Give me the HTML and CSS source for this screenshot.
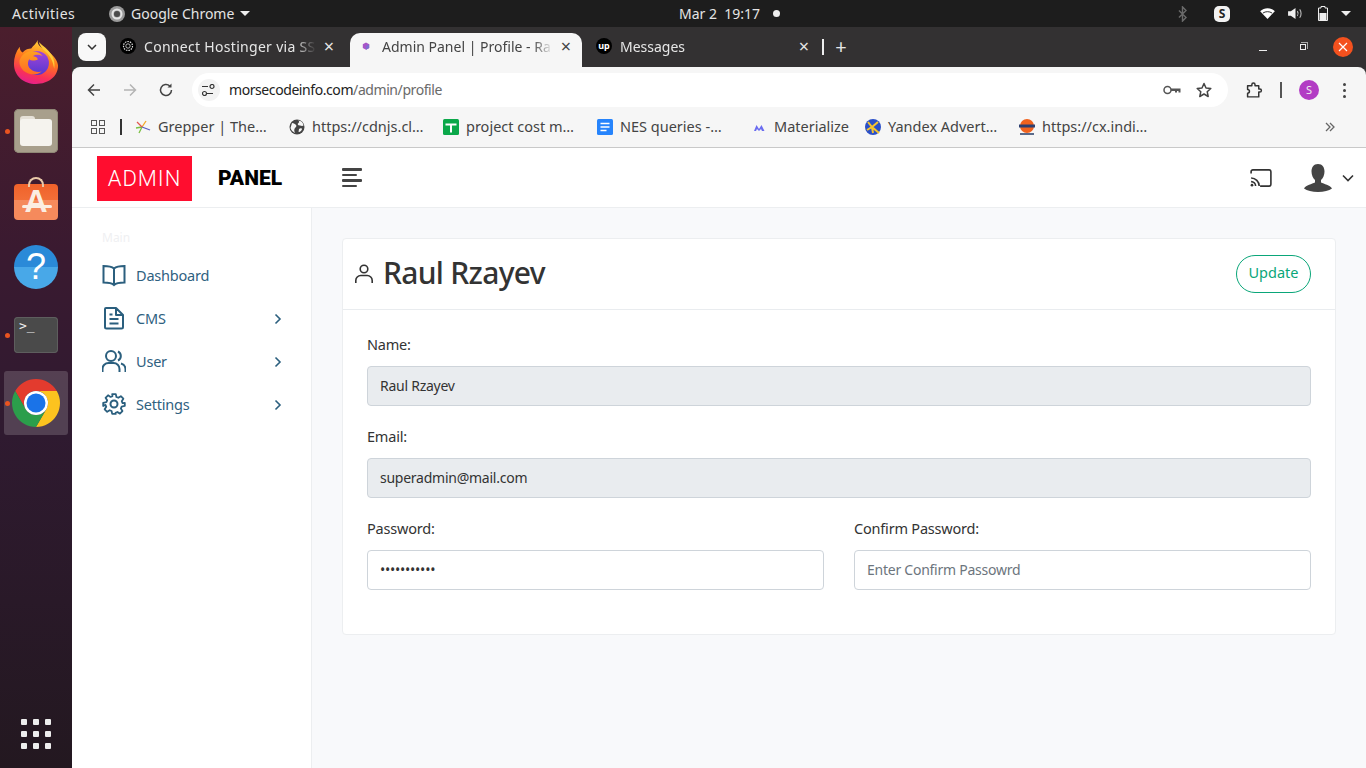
FILE: index.html
```html
<!doctype html>
<html lang="en">
  <head>
    <title>Admin Panel | Profile</title>
    <link rel="stylesheet" href="styles.css">
  </head>
  <body>
    <div class="topbar">
      <div class="topbar-left">
        <span class="activities">Activities</span>
        <span class="app-menu">
          <svg class="app-icon" viewBox="0 0 16 16"><circle cx="8" cy="8" r="8" fill="#9a9a9a"/><circle cx="8" cy="8" r="4.5" fill="none" stroke="#e4e4e4" stroke-width="2"/><circle cx="8" cy="8" r="3" fill="#4a4a4a"/></svg>
          Google Chrome
          <span class="caret"></span>
        </span>
      </div>
      <div class="clock">
        <span>Mar 2&nbsp;&nbsp;19:17</span>
        <span class="clock-dot"></span>
      </div>
      <div class="tray">
        <svg class="tray-bt" viewBox="0 0 10 18"><path d="M1 5l8 8-4 4V1l4 4-8 8" fill="none" stroke="#6a6a6a" stroke-width="1.6"/></svg>
        <span class="tray-skype">S</span>
        <svg class="tray-wifi" viewBox="0 0 16 12"><path d="M0 3.5C4.5-.8 11.5-.8 16 3.5L8 12z" fill="#fff"/><path d="M3 5.5c3-2 7-2 10 0" fill="none" stroke="#1d1d1d" stroke-width="1"/></svg>
        <svg class="tray-vol" viewBox="0 0 16 14"><path d="M0 4.5h3L8 1v12L3 9.5H0z" fill="#eee"/><path d="M10 4.5c1 1.5 1 3.5 0 5M12.5 2.5c2 2.5 2 6.5 0 9" fill="none" stroke="#bbb" stroke-width="1.2"/></svg>
        <svg class="tray-bat" viewBox="0 0 10 15"><path d="M3 .5h4V2h2.500v12.500H.5V2H3z" fill="none" stroke="#eee" stroke-width="1"/><rect x="1.5" y="7" width="7" height="7" fill="#eee"/></svg>
        <span class="caret"></span>
      </div>
    </div>

    <div class="desktop">
      <div class="dock">
        <div class="dock-item dock-first">
          <svg class="dock-firefox" viewBox="0 0 48 48">
            <defs>
              <linearGradient id="foxOuter" x1="0.7" y1="0" x2="0.4" y2="1"><stop offset="0" stop-color="#ffd93a"/><stop offset="0.45" stop-color="#ff7a1c"/><stop offset="0.8" stop-color="#f8305a"/><stop offset="1" stop-color="#e5208a"/></linearGradient>
              <linearGradient id="foxGlobe" x1="0.5" y1="0" x2="0.5" y2="1"><stop offset="0" stop-color="#a645d8"/><stop offset="1" stop-color="#5538d0"/></linearGradient>
              <linearGradient id="foxHead" x1="0.5" y1="0" x2="0.5" y2="1"><stop offset="0" stop-color="#ffa01f"/><stop offset="1" stop-color="#ff6a25"/></linearGradient>
            </defs>
            <path d="M26 1c-2 6 6 9 12 13 6 5 9 10 9 14 0 11-10 19-23 19C11 47 1 38 1 26c0-7 2-13 6-18 0 3 1 5 3 6 3-3 6-4 9-4 2-3 5-5 7-9z" fill="url(#foxOuter)"/>
            <circle cx="25" cy="25" r="12.500" fill="url(#foxGlobe)"/>
            <path d="M7 22c2-6 8-10 14-9 4 0 8 2 10 5-4-2-8-2-10 0 2 0 4 1 5 3-3 2-7 2-9 0-2 3-2 7 1 10 3 3 8 4 12 3-6 5-14 3-19-1-3-3-5-7-4-11z" fill="url(#foxHead)"/>
            <path d="M27 3c4 4 10 8 13 13 3 5 4 10 3 15-1-6-3-12-8-17-3-3-7-6-8-11z" fill="#ffcb3a"/>
          </svg>
        </div>
        <div class="dock-item">
          <span class="dock-dot"></span>
          <div class="dock-files"><div class="files-tab"></div><div class="files-folder"></div></div>
        </div>
        <div class="dock-item">
          <div class="dock-store"><span class="store-handle"></span><span class="store-a">A</span></div>
        </div>
        <div class="dock-item">
          <div class="dock-help">?</div>
        </div>
        <div class="dock-item">
          <span class="dock-dot"></span>
          <div class="dock-term">&gt;_</div>
        </div>
        <div class="dock-item dock-active">
          <span class="dock-dot"></span>
          <svg class="dock-chrome" viewBox="0 0 48 48">
            <path d="M44.78 12A24 24 0 0 0 3.22 12L13.6 30A12 12 0 0 1 24 12Z" fill="#e33b2e"/>
            <path d="M24 48A24 24 0 0 0 44.78 12L24 12A12 12 0 0 1 34.4 30Z" fill="#fcc31f"/>
            <path d="M3.22 12A24 24 0 0 0 24 48L34.4 30A12 12 0 0 1 13.6 30Z" fill="#2b9e4b"/>
            <circle cx="24" cy="24" r="12" fill="#fff"/>
            <circle cx="24" cy="24" r="9.5" fill="#1a73e8"/>
          </svg>
        </div>
        <div class="dock-grid">
          <i></i><i></i><i></i><i></i><i></i><i></i><i></i><i></i><i></i>
        </div>
      </div>

      <div class="window">
        <div class="tabstrip">
          <button class="tab-search"><svg viewBox="0 0 10 6"><path d="M1 1l4 4 4-4" fill="none" stroke="#333" stroke-width="1.5"/></svg></button>
          <div class="tab tab-first">
            <svg class="tab-fav" viewBox="0 0 16 16"><circle cx="8" cy="8" r="8" fill="#000"/><circle cx="8" cy="8" r="4.5" fill="none" stroke="#ddd" stroke-width="1.2" stroke-dasharray="1.5 1"/><circle cx="8" cy="8" r="2.2" fill="none" stroke="#ddd" stroke-width="0.8"/></svg>
            <span class="tab-title">Connect Hostinger via SS</span>
            <span class="tab-x">&times;</span>
          </div>
          <div class="tab tab-active">
            <svg class="tab-fav" viewBox="0 0 16 16"><path d="M8 4.500l3.200 1.800v3.600L8 11.700 4.800 9.900V6.300z" fill="#a855c8"/><path d="M8 8l3.200-1.700v3.600L8 11.700z" fill="#7d6fd0"/></svg>
            <span class="tab-title">Admin Panel | Profile - Ra</span>
            <span class="tab-x">&times;</span>
          </div>
          <div class="tab tab-last">
            <span class="tab-up">up</span>
            <span class="tab-title">Messages</span>
            <span class="tab-x">&times;</span>
          </div>
          <span class="tab-sep"></span>
          <span class="tab-new">+</span>
          <div class="win-controls">
            <span class="win-min"></span>
            <span class="win-max"></span>
            <span class="win-close"><svg viewBox="0 0 10 10"><path d="M1 1l8 8M9 1l-8 8" stroke="#fff" stroke-width="1.2"/></svg></span>
          </div>
        </div>

        <div class="toolbar">
          <svg class="tool-ic" viewBox="0 0 16 16"><path d="M14 8H2.500M8 2.500L2.500 8 8 13.500" fill="none" stroke="#444" stroke-width="1.5"/></svg>
          <svg class="tool-ic tool-off" viewBox="0 0 16 16"><path d="M2 8h11.500M8 2.500L13.500 8 8 13.500" fill="none" stroke="#b4b4b4" stroke-width="1.5"/></svg>
          <svg class="tool-ic" viewBox="0 0 16 16"><path d="M13.500 8A5.500 5.500 0 1 1 11.800 4" fill="none" stroke="#444" stroke-width="1.5"/><path d="M13.500 1.500v4h-4z" fill="#444"/></svg>
          <div class="omnibox">
            <span class="site-info"><svg viewBox="0 0 14 12"><path d="M0 2.500h6M11 9.500H5" stroke="#333" stroke-width="1.2"/><circle cx="10" cy="2.500" r="2" fill="none" stroke="#333" stroke-width="1.2"/><circle cx="2.500" cy="9.500" r="2" fill="none" stroke="#333" stroke-width="1.2"/></svg></span>
            <span class="url">morsecodeinfo.com<span class="url-path">/admin/profile</span></span>
            <svg class="omni-key" viewBox="0 0 18 10"><circle cx="4.500" cy="5" r="3.500" fill="none" stroke="#555" stroke-width="1.5"/><path d="M8 3.500h9.500v4h-2V6h-1.500v1.500h-2V6H8z" fill="#555"/></svg>
            <svg class="omni-star" viewBox="0 0 16 16"><path d="M8 1.500l2 4.500 4.800.5-3.600 3.200 1 4.800L8 12l-4.200 2.500 1-4.800L1.200 6.500 6 6z" fill="none" stroke="#444" stroke-width="1.5" stroke-linejoin="round"/></svg>
          </div>
          <svg class="tool-ext" viewBox="0 0 16 16"><path d="M5.500 2.500a1.500 1.500 0 0 1 3 0V3.500h3.500v3h1a1.500 1.500 0 0 1 0 3h-1v4.500H1.500v-3.500a1.500 1.500 0 0 0 0-3.500V3.500h4z" fill="none" stroke="#333" stroke-width="1.4" stroke-linejoin="round"/></svg>
          <span class="tool-sep"></span>
          <span class="avatar">S</span>
          <span class="tool-menu"><i></i><i></i><i></i></span>
        </div>

        <div class="bookmarks">
          <span class="apps"><i></i><i></i><i></i><i></i></span>
          <span class="bm-sep"></span>
          <span class="bm">
            <svg viewBox="0 0 16 16"><path d="M7 8l-3 6M7 8l-6 1" stroke="#7bc043" stroke-width="1.3" fill="none"/><path d="M7 8l4-6" stroke="#f5a623" stroke-width="1.3"/><path d="M7 8l8 3" stroke="#5c5fc4" stroke-width="1.3"/><path d="M7 8L2 3" stroke="#e2554f" stroke-width="1.3"/></svg>
            Grepper | The…
          </span>
          <span class="bm">
            <svg viewBox="0 0 16 16"><circle cx="8" cy="8" r="7.5" fill="#444"/><path d="M3 4c2 0 3 1 4 2s0 2-1 3-1 3 0 5c-2-1-4-3-4.500-5zM9 1.500c2 1 1 2 0 3s1 2 2 2 2 1 3.500 0c0-2-2-5-5.500-5zM10 10c1-1 3-1 3 0s-2 3-3 3 0-2 0-3z" fill="#f6f6f6"/></svg>
            https://cdnjs.cl…
          </span>
          <span class="bm">
            <svg viewBox="0 0 16 16"><rect width="16" height="16" rx="1.5" fill="#0ba84a"/><path d="M2.500 5.500h11M8 5.500v8" stroke="#fff" stroke-width="2"/></svg>
            project cost m…
          </span>
          <span class="bm">
            <svg viewBox="0 0 16 16"><rect width="16" height="16" rx="1.5" fill="#2684fc"/><path d="M3.500 4.500h9M3.500 8h9M3.500 11.500h6" stroke="#fff" stroke-width="1.5"/></svg>
            NES queries -…
          </span>
          <span class="bm bm-short">
            <svg viewBox="0 0 16 16"><path d="M3 12l2.500-6 2.500 4 2.500-4 3 6h-2.500l-1-2-2 2-2-2-1 2z" fill="#6a6cf0"/></svg>
            Materialize
          </span>
          <span class="bm">
            <svg viewBox="0 0 16 16"><circle cx="8" cy="8" r="8" fill="#2a4fc8"/><path d="M3 3l4 5 6-5M2 11l5-3 7 6M7 8l1 6" fill="none" stroke="#f7c52e" stroke-width="2"/></svg>
            Yandex Advert…
          </span>
          <span class="bm">
            <svg viewBox="0 0 16 16"><circle cx="8" cy="7" r="7" fill="#f0621e"/><rect x="0" y="5.500" width="16" height="3" fill="#2c3e70"/><rect x="1" y="14" width="14" height="2" fill="#5a6a8a"/></svg>
            https://cx.indi…
          </span>
          <svg class="bm-more" viewBox="0 0 10 10"><path d="M1 1l4 4-4 4M5 1l4 4-4 4" fill="none" stroke="#666" stroke-width="1.3"/></svg>
        </div>

        <div class="site-header">
          <div class="logo"><span class="logo-red">ADMIN</span><span class="logo-text">PANEL</span></div>
          <span class="hamburger"><i></i><i class="short"></i><i></i><i class="short"></i></span>
          <svg class="cast" viewBox="0 0 24 20"><path d="M1 5V3a2 2 0 0 1 2-2h18a2 2 0 0 1 2 2v14a2 2 0 0 1-2 2H11" fill="none" stroke="#333" stroke-width="1.8"/><path d="M1 10a9 9 0 0 1 9 9M1 14a5 5 0 0 1 5 5" fill="none" stroke="#333" stroke-width="1.8"/><circle cx="2" cy="18" r="1.5" fill="#333"/></svg>
          <svg class="user-pic" viewBox="0 0 28 28"><path d="M14 0c4.500 0 6.500 3.500 6.500 7.500 0 3.500-1.500 7-3.500 8.500v2.500c3 1.500 9 2.500 11 6-3 2-8 3.500-14 3.500S3 26.500 0 24.500c2-3.500 8-4.500 11-6V16C9 14.500 7.500 11 7.500 7.500 7.500 3.500 9.500 0 14 0z" fill="#444"/></svg>
          <svg class="user-caret" viewBox="0 0 12 8"><path d="M1 1.500l5 5 5-5" fill="none" stroke="#333" stroke-width="1.6"/></svg>
        </div>

        <div class="page">
          <aside class="sidebar">
            <div class="side-title">Main</div>
            <a class="side-link">
              <svg viewBox="0 0 24 24"><path d="M12 5.500C10 3.800 6 3 1.500 3v16.500c4.500 0 8.500.5 10.500 2.500 2-2 6-2.500 10.500-2.500V3C18 3 14 3.800 12 5.500zM12 5.500V22" fill="none" stroke="#2b5f7e" stroke-width="2"/></svg>
              <span>Dashboard</span>
            </a>
            <a class="side-link">
              <svg viewBox="0 0 24 24"><path d="M4 2h10l7 7v12a1.500 1.500 0 0 1-1.500 1.500h-15A1.500 1.500 0 0 1 3 21V3a1 1 0 0 1 1-1zM14 2v7h7M7.500 13h9M7.500 17.500h9M7.500 8.500h3" fill="none" stroke="#2b5f7e" stroke-width="2" stroke-linejoin="round"/></svg>
              <span>CMS</span>
              <svg class="side-arrow" viewBox="0 0 8 12"><path d="M1.500 1.500L6 6l-4.500 4.500" fill="none" stroke="#2b5f7e" stroke-width="1.6"/></svg>
            </a>
            <a class="side-link">
              <svg viewBox="0 0 24 24"><circle cx="9" cy="7" r="5" fill="none" stroke="#2b5f7e" stroke-width="2"/><path d="M.5 23v-3a6 6 0 0 1 6-6h5a6 6 0 0 1 6 6v3M16 2.500a5 5 0 0 1 0 9M19 14.500a6 6 0 0 1 4.500 5.500v3" fill="none" stroke="#2b5f7e" stroke-width="2"/></svg>
              <span>User</span>
              <svg class="side-arrow" viewBox="0 0 8 12"><path d="M1.500 1.500L6 6l-4.500 4.500" fill="none" stroke="#2b5f7e" stroke-width="1.6"/></svg>
            </a>
            <a class="side-link">
              <svg viewBox="0 0 24 24"><circle cx="12" cy="12" r="3.500" fill="none" stroke="#2b5f7e" stroke-width="2"/><path d="M10 1h4l.7 3.200 2.100.9 2.800-1.800 2.800 2.800-1.800 2.800.9 2.100L24 10.800v3.400l-3.500.8-.9 2.100 1.800 2.800-2.800 2.800-2.800-1.800-2.100.9L14 23h-4l-.7-3.200-2.100-.9-2.800 1.800-2.800-2.800 1.800-2.800-.9-2.100L0 14.200v-3.400l3.500-.8.900-2.100-1.800-2.800 2.800-2.800 2.800 1.800 2.100-.9z" fill="none" stroke="#2b5f7e" stroke-width="2" stroke-linejoin="round" transform="translate(1.2 1.2) scale(.9)"/></svg>
              <span>Settings</span>
              <svg class="side-arrow" viewBox="0 0 8 12"><path d="M1.500 1.500L6 6l-4.500 4.500" fill="none" stroke="#2b5f7e" stroke-width="1.6"/></svg>
            </a>
          </aside>

          <main class="content">
            <div class="card">
              <div class="card-header">
                <h1>
                  <svg viewBox="0 0 18 20"><circle cx="9" cy="5" r="3.800" fill="none" stroke="#333" stroke-width="1.6"/><path d="M.8 19v-2.500a5 5 0 0 1 5-5h6.400a5 5 0 0 1 5 5V19" fill="none" stroke="#333" stroke-width="1.6"/></svg>
                  <span class="h1-text">Raul Rzayev</span>
                </h1>
                <button class="btn-update" type="button">Update</button>
              </div>
              <form class="card-body">
                <div class="field">
                  <label>Name:</label>
                  <input type="text" value="Raul Rzayev" disabled>
                </div>
                <div class="field">
                  <label>Email:</label>
                  <input type="text" value="superadmin@mail.com" disabled>
                </div>
                <div class="field-row">
                  <div class="field">
                    <label>Password:</label>
                    <input type="password" value="12345678901">
                  </div>
                  <div class="field">
                    <label>Confirm Password:</label>
                    <input type="password" placeholder="Enter Confirm Passowrd">
                  </div>
                </div>
              </form>
            </div>
          </main>
        </div>
      </div>
    </div>
  </body>
</html>
```

FILE: styles.css
```css
* {
  box-sizing: border-box;
}

html, body {
  margin: 0;
  height: 100%;
  overflow: hidden;
}

body {
  width: 1366px;
  height: 768px;
  display: flex;
  flex-direction: column;
  font-family: "Noto Sans", sans-serif;
  background: #fff;
}

/* ubuntu top bar */
.topbar {
  height: 27px;
  flex: none;
  background: #1d1d1d;
  color: #e4e4e4;
  font-size: 14px;
  display: flex;
  align-items: center;
  padding-left: 12px;
}

.topbar-left {
  width: 667px;
  display: flex;
  align-items: center;
}

.activities {
  width: 97px;
  letter-spacing: 0.5px;
}

.app-menu {
  display: flex;
  align-items: center;
}

.app-icon {
  width: 16px;
  height: 16px;
  margin-right: 6px;
}

.caret {
  display: inline-block;
  width: 0;
  height: 0;
  border-left: 5px solid transparent;
  border-right: 5px solid transparent;
  border-top: 5px solid #eee;
  margin-left: 6px;
}

.clock {
  display: flex;
  align-items: center;
}

.clock-dot {
  width: 7px;
  height: 7px;
  border-radius: 50%;
  background: #eee;
  margin-left: 13px;
}

.tray {
  margin-left: auto;
  padding-right: 15px;
  display: flex;
  align-items: center;
}

.tray-bt {
  width: 9px;
  height: 16px;
}

.tray-skype {
  width: 16px;
  height: 16px;
  margin-left: 27px;
  border-radius: 5px;
  background: #f2f2f2;
  color: #222;
  font-size: 12px;
  font-weight: 700;
  line-height: 16px;
  text-align: center;
}

.tray-wifi {
  width: 15px;
  height: 11px;
  margin-left: 30px;
}

.tray-vol {
  width: 15px;
  height: 13px;
  margin-left: 13px;
}

.tray-bat {
  width: 10px;
  height: 15px;
  margin-left: 15px;
}

.tray-bat + .caret {
  margin-left: 13px;
}

/* dock */
.desktop {
  flex: 1;
  display: flex;
  min-height: 0;
}

.dock {
  width: 72px;
  flex: none;
  padding-top: 2px;
  background: linear-gradient(#4b1e2d 0, #3a1a30 30%, #2f1a30 55%, #231820 100%);
  display: flex;
  flex-direction: column;
  align-items: center;
}

.dock-item {
  position: relative;
  width: 64px;
  height: 68px;
  display: flex;
  align-items: center;
  justify-content: center;
  border-radius: 3px;
}

.dock-first {
  padding-bottom: 2px;
}

.dock-active {
  background: rgba(255, 255, 255, 0.17);
  height: 64px;
  margin-top: 2px;
}

.dock-dot {
  position: absolute;
  left: 1px;
  top: 50%;
  width: 5px;
  height: 5px;
  margin-top: -2px;
  border-radius: 50%;
  background: #e95420;
}

.dock-firefox {
  width: 46px;
  height: 46px;
}

.dock-files {
  position: relative;
  width: 44px;
  height: 44px;
  border-radius: 5px;
  background: #a89f8c;
  box-shadow: inset 0 0 0 1px #8f8876;
}

.files-tab {
  position: absolute;
  left: 6px;
  top: 7px;
  width: 15px;
  height: 8px;
  border-radius: 3px 3px 0 0;
  background: #e6e1d8;
}

.files-folder {
  position: absolute;
  left: 6px;
  top: 10px;
  width: 32px;
  height: 27px;
  border-radius: 3px;
  background: #f5f3ee;
}

.dock-store {
  position: relative;
  width: 44px;
  height: 36px;
  margin-top: 6px;
  border-radius: 4px;
  background: linear-gradient(#f0622a 0, #f26f38 45%, #f58a5c 45%, #f58a5c 100%);
  text-align: center;
}

.dock-store::after {
  content: "";
  position: absolute;
  left: 8px;
  right: 6px;
  top: 21px;
  height: 3px;
  border-radius: 2px;
  background: #fbeee2;
}

.store-handle {
  position: absolute;
  left: 14px;
  top: -7px;
  width: 16px;
  height: 10px;
  border: 2px solid #e9c9a8;
  border-bottom: none;
  border-radius: 8px 8px 0 0;
}

.store-a {
  color: #fbeee2;
  font-size: 32px;
  font-weight: 700;
  line-height: 35px;
  font-family: "Liberation Sans", sans-serif;
}

.dock-help {
  width: 44px;
  height: 44px;
  border-radius: 50%;
  background: linear-gradient(#2a8ad8 0, #2a8ad8 50%, #48a8e8 50%, #48a8e8 100%);
  color: #fff;
  font-size: 36px;
  line-height: 44px;
  text-align: center;
  font-family: "Liberation Sans", sans-serif;
}

.dock-term {
  width: 44px;
  height: 36px;
  padding: 1px 5px;
  border-radius: 4px;
  background: #4a4a4a;
  box-shadow: inset 0 0 0 1px #5e5e5e;
  color: #eee;
  font-size: 13px;
  line-height: 16px;
  font-family: "DejaVu Sans Mono", monospace;
}

.dock-chrome {
  width: 48px;
  height: 48px;
}

.dock-grid {
  margin-top: auto;
  margin-bottom: 19px;
  display: grid;
  grid-template-columns: repeat(3, 6px);
  gap: 6px;
}

.dock-grid i {
  width: 6px;
  height: 6px;
  border-radius: 1px;
  background: #eee;
}

/* chrome window */
.window {
  flex: 1;
  min-width: 0;
  display: flex;
  flex-direction: column;
  background: #333132;
}

.tabstrip {
  height: 40px;
  flex: none;
  display: flex;
  align-items: flex-end;
  padding-left: 6px;
  color: #e6e6e6;
  font-size: 14px;
}

.tab-search {
  width: 28px;
  height: 28px;
  margin-bottom: 6px;
  padding: 0;
  border: none;
  border-radius: 8px;
  background: #f8f8f8;
}

.tab-search svg {
  width: 10px;
  height: 6px;
  display: block;
  margin: 0 auto;
}

.tab {
  height: 34px;
  display: flex;
  align-items: center;
  padding: 0 16px 8px 14px;
  width: 232px;
}

.tab-first {
  width: 244px;
  padding-left: 14px;
  padding-right: 14px;
  letter-spacing: 0.3px;
}

.tab-active {
  background: #f6f6f6;
  color: #444;
  border-radius: 10px 10px 0 0;
  padding-left: 8px;
  padding-right: 9px;
}

.tab-last {
  width: 240px;
  padding-left: 14px;
  padding-right: 11px;
}

.tab-fav {
  width: 16px;
  height: 16px;
  flex: none;
}

.tab-up {
  width: 16px;
  height: 16px;
  flex: none;
  border-radius: 50%;
  background: #000;
  color: #fff;
  font-size: 9px;
  font-weight: 700;
  line-height: 15px;
  text-align: center;
}

.tab-title {
  flex: 1;
  min-width: 0;
  margin-left: 8px;
  white-space: nowrap;
  overflow: hidden;
  -webkit-mask-image: linear-gradient(to right, #000 88%, transparent);
  mask-image: linear-gradient(to right, #000 88%, transparent);
}

.tab-x {
  width: 14px;
  font-size: 18px;
  line-height: 16px;
  text-align: center;
  margin-left: 6px;
}

.tab-sep {
  width: 2px;
  height: 16px;
  margin: 0 0 12px 0;
  background: #eee;
}

.tab-new {
  width: 14px;
  margin: 0 0 8px 10px;
  font-size: 20px;
  line-height: 24px;
  text-align: center;
}

.win-controls {
  margin-left: auto;
  height: 40px;
  display: flex;
  align-items: center;
  padding: 0 13px 0 0;
}

.win-min {
  width: 8px;
  height: 1px;
  margin-top: 7px;
  background: #eee;
}

.win-max {
  position: relative;
  width: 6px;
  height: 6px;
  margin-left: 33px;
  border: 1px solid #eee;
}

.win-max::after {
  content: "";
  position: absolute;
  right: -3px;
  top: -3px;
  width: 6px;
  height: 6px;
  border-top: 1px solid #aaa;
  border-right: 1px solid #aaa;
}

.win-close {
  width: 20px;
  height: 20px;
  margin-left: 27px;
  border-radius: 50%;
  background: #f4511e;
  display: flex;
  align-items: center;
  justify-content: center;
}

.win-close svg {
  width: 10px;
  height: 10px;
}

.toolbar {
  height: 42px;
  flex: none;
  background: #f6f6f6;
  border-radius: 8px 8px 0 0;
  display: flex;
  align-items: center;
  padding: 4px 0 0 14px;
}

.tool-ic {
  width: 16px;
  height: 16px;
  margin-right: 20px;
}

.omnibox {
  width: 1036px;
  height: 34px;
  margin-left: -2px;
  border-radius: 17px;
  background: #fff;
  display: flex;
  align-items: center;
  padding-left: 6px;
}

.site-info {
  width: 22px;
  height: 22px;
  border-radius: 50%;
  background: #f3f3f3;
  display: flex;
  align-items: center;
  justify-content: center;
}

.site-info svg {
  width: 14px;
  height: 12px;
}

.url {
  margin: 0 0 2px 9px;
  font-size: 14px;
  letter-spacing: -0.42px;
  color: #222;
}

.url-path {
  color: #6a6a6a;
}

.omni-key {
  width: 18px;
  height: 10px;
  margin-left: auto;
}

.omni-star {
  width: 16px;
  height: 16px;
  margin: 0 16px 0 15px;
}

.tool-ext {
  width: 17px;
  height: 17px;
  margin-left: 18px;
}

.tool-sep {
  width: 2px;
  height: 16px;
  margin-left: 17px;
  background: #555;
}

.avatar {
  width: 20px;
  height: 20px;
  margin-left: 17px;
  border-radius: 50%;
  background: #b23cc4;
  color: #eee;
  font-size: 11px;
  line-height: 20px;
  text-align: center;
}

.tool-menu {
  margin-left: 24px;
  display: flex;
  flex-direction: column;
  gap: 3px;
}

.tool-menu i {
  width: 3px;
  height: 3px;
  border-radius: 50%;
  background: #444;
}

.bookmarks {
  height: 39px;
  flex: none;
  background: #f6f6f6;
  border-bottom: 1px solid #c9c9c9;
  display: flex;
  align-items: center;
  padding: 0 0 2px 19px;
  font-size: 14.5px;
  line-height: 18px;
  color: #444;
}

.apps {
  display: grid;
  grid-template-columns: repeat(2, 6px);
  gap: 2px;
}

.apps i {
  width: 6px;
  height: 6px;
  border: 1.5px solid #555;
}

.bm-sep {
  width: 2px;
  height: 16px;
  margin: 0 13px 0 15px;
  background: #333;
}

.bm {
  width: 154px;
  display: flex;
  align-items: center;
  white-space: nowrap;
  padding-bottom: 2px;
}

.bm svg {
  width: 16px;
  height: 16px;
  margin: 2px 7px 0 0;
  flex: none;
}

.bm-short {
  width: 114px;
}

.bm-more {
  width: 10px;
  height: 10px;
  margin-left: 152px;
}

/* site */
.site-header {
  height: 60px;
  flex: none;
  background: #fff;
  border-bottom: 1px solid #eceef0;
  display: flex;
  align-items: center;
  padding: 0 12px 0 25px;
}

.logo {
  display: flex;
  align-items: center;
  width: 245px;
}

.logo-red {
  width: 95px;
  height: 45px;
  margin-top: 1px;
  background: #ff0d2f;
  color: #fff;
  font-family: Roboto, sans-serif;
  font-size: 22px;
  font-weight: 300;
  letter-spacing: 1px;
  line-height: 45px;
  text-align: center;
}

.logo-text {
  margin-left: 26px;
  font-family: Roboto, sans-serif;
  font-size: 21px;
  font-weight: 900;
  color: #000;
}

.hamburger {
  display: flex;
  flex-direction: column;
  gap: 3px;
}

.hamburger i {
  width: 20px;
  height: 2.5px;
  background: #444;
  border-radius: 1px;
}

.hamburger i.short {
  width: 15px;
}

.cast {
  width: 22px;
  height: 18px;
  margin-left: auto;
}

.user-pic {
  width: 28px;
  height: 28px;
  margin-left: 32px;
}

.user-caret {
  width: 12px;
  height: 8px;
  margin-left: 10px;
}

.page {
  flex: 1;
  min-height: 0;
  display: flex;
  background: #f8f9fb;
  color: #333;
}

.sidebar {
  width: 240px;
  flex: none;
  background: #fff;
  border-right: 1px solid #eceef0;
  padding: 21px 30px 0;
}

.side-title {
  font-size: 12px;
  line-height: 18px;
  color: #eff0f2;
  margin-bottom: 6px;
}

.side-link {
  height: 43px;
  display: flex;
  align-items: center;
  color: #2f617f;
  font-size: 14.5px;
  letter-spacing: -0.2px;
}

.side-link svg {
  width: 24px;
  height: 24px;
  flex: none;
  margin-right: 10px;
}

.side-link svg.side-arrow {
  width: 8px;
  height: 12px;
  margin: 2px 0 0 auto;
  position: relative;
  right: -1px;
}

.content {
  flex: 1;
  padding: 30px 30px 0;
}

.card {
  background: #fff;
  border: 1px solid #eceef0;
  border-radius: 4px;
}

.card-header {
  height: 71px;
  border-bottom: 1px solid #e9ecef;
  display: flex;
  align-items: center;
  justify-content: space-between;
  padding: 0 24px 0 12px;
}

h1 {
  margin: 0;
  display: flex;
  align-items: center;
  font-size: 30px;
  font-weight: 500;
  color: #333;
  letter-spacing: -0.7px;
}

.h1-text {
  margin-top: -4px;
}

h1 svg {
  width: 18px;
  height: 20px;
  margin-right: 10px;
}

.btn-update {
  width: 75px;
  height: 38px;
  border: 1px solid #0aa679;
  border-radius: 19px;
  background: #fff;
  color: #0aa679;
  font-family: inherit;
  font-size: 14.5px;
  padding: 0 0 4px;
}

.card-body {
  padding: 22px 24px 44px;
}

.field {
  flex: 1;
  margin-bottom: 18px;
}

.field-row {
  display: flex;
  gap: 30px;
}

.field-row .field {
  margin-bottom: 0;
}

label {
  display: block;
  height: 24px;
  margin-bottom: 10px;
  font-size: 14.5px;
  line-height: 24px;
  letter-spacing: -0.2px;
  color: #333;
}

input {
  display: block;
  width: 100%;
  height: 40px;
  padding: 0 12px 2px;
  border: 1px solid #ced4da;
  border-radius: 4px;
  background: #fff;
  color: #333;
  font-family: inherit;
  font-size: 14px;
  letter-spacing: -0.25px;
}

input:disabled {
  background: #e9ecef;
  opacity: 1;
  color: #333;
}

input::placeholder {
  color: #6c757d;
}
```
